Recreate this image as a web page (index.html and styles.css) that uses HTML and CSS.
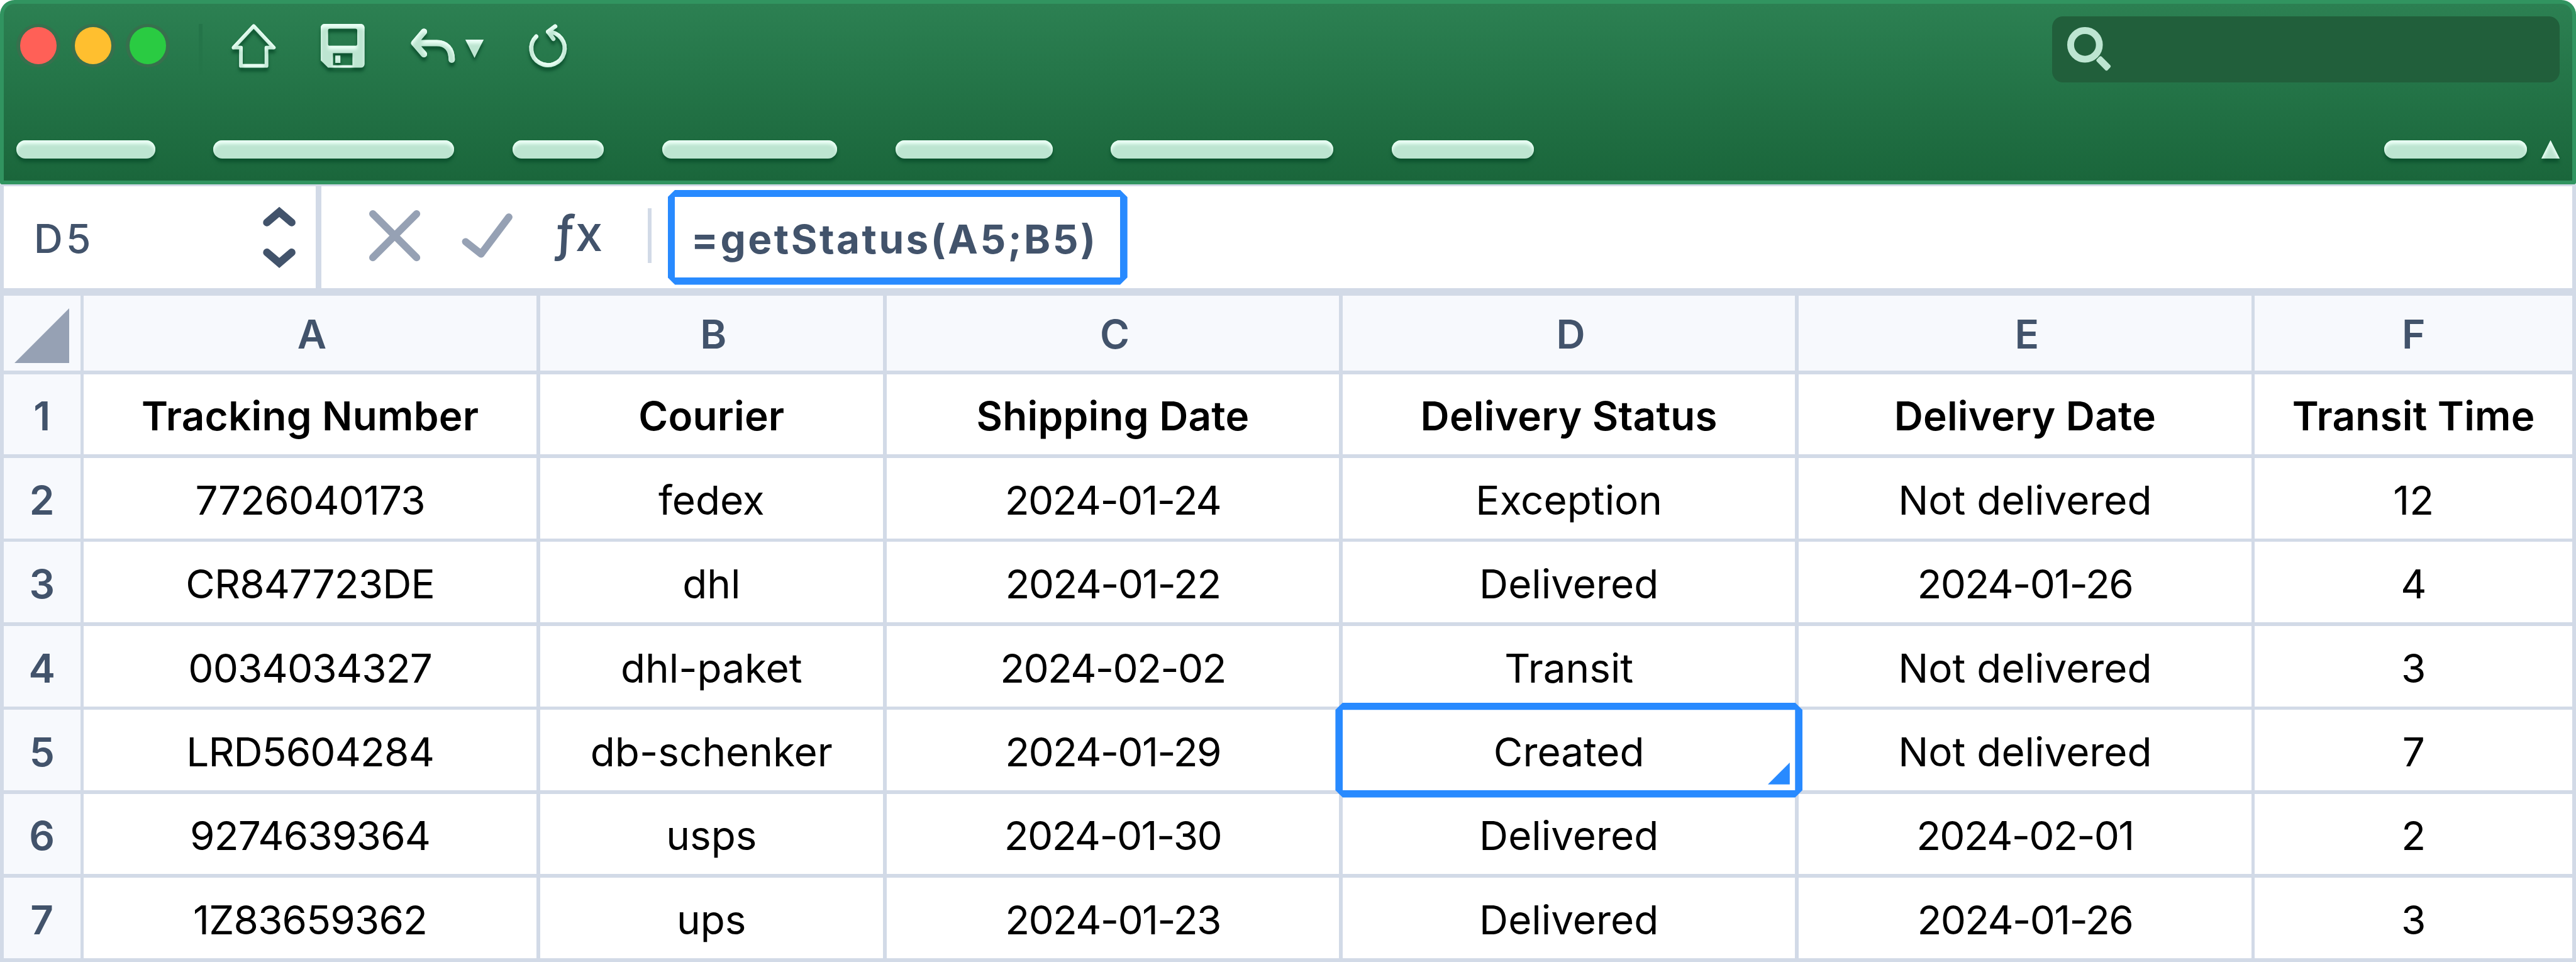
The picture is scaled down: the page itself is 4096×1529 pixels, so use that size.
FILE: index.html
```html
<!DOCTYPE html>
<html lang="en">
<head>
<meta charset="utf-8">
<title>Shipment tracking sheet</title>
<link rel="stylesheet" href="styles.css">
</head>
<body>
<main class="window">
  <header class="ribbon">
    <div class="titlebar">
      <div class="lights">
        <span class="light light-close"></span>
        <span class="light light-min"></span>
        <span class="light light-max"></span>
      </div>
      <span class="titlebar-rule"></span>
      <svg class="icon icon-home" viewBox="0 0 25 24">
        <defs>
          <filter id="emboss" filterUnits="userSpaceOnUse" x="-6" y="-6" width="40" height="40" color-interpolation-filters="sRGB">
            <feOffset in="SourceAlpha" dy="2" result="low"/>
            <feGaussianBlur in="low" stdDeviation="1" result="soft"/>
            <feFlood flood-color="#0a4f2c" flood-opacity=".9"/>
            <feComposite in2="soft" operator="in" result="shade"/>
            <feFlood flood-color="#eafff5"/>
            <feComposite in2="soft" operator="out"/>
            <feComposite in2="SourceAlpha" operator="in" result="shine"/>
            <feMerge>
              <feMergeNode in="shade"/>
              <feMergeNode in="SourceGraphic"/>
              <feMergeNode in="shine"/>
            </feMerge>
          </filter>
        </defs>
        <path class="line line-thin" d="M12.2 1.2 23.2 13H19.2V23H5.2V13H1.2Z"/>
      </svg>
      <svg class="icon icon-save" viewBox="0 0 24 24">
        <path class="solid" fill-rule="evenodd" d="M2 0H22A2 2 0 0 1 24 2V22A2 2 0 0 1 22 24H4L0 20V2A2 2 0 0 1 2 0ZM5 2.6A1 1 0 0 0 4 3.6V11A1 1 0 0 0 5 12H19A1 1 0 0 0 20 11V3.6A1 1 0 0 0 19 2.6ZM6.7 16V22.7H17.4V16ZM8 17.3H10.75V21.4H8Z"/>
      </svg>
      <svg class="icon icon-undo" viewBox="0 0 25 24">
        <path class="line line-thick" d="M7.25 4.3 2 10.5 7.25 16.6M2 10.5H14.3C19.4 10.5 22.5 13.8 22.5 19.6"/>
      </svg>
      <svg class="icon icon-caret" viewBox="0 0 10 10">
        <path class="solid" d="M0 0H10L5 10Z"/>
      </svg>
      <svg class="icon icon-redo" viewBox="0 0 22 24">
        <path class="line line-mid" d="M4 6.95A9.15 9.15 0 1 0 10.5 4.3M14.4 1.35 10.5 4.25 13.4 8.2"/>
      </svg>
      <div class="search">
        <svg class="icon-search" viewBox="0 0 24 24">
          <circle cx="9.75" cy="9.75" r="7.875"/>
          <rect x="15.7" y="18" width="8.4" height="3.8" rx=".9" transform="rotate(45 19.9 19.9)"/>
        </svg>
      </div>
    </div>
    <nav class="tabs">
      <span class="pill pill-1"></span>
      <span class="pill pill-2"></span>
      <span class="pill pill-3"></span>
      <span class="pill pill-4"></span>
      <span class="pill pill-5"></span>
      <span class="pill pill-6"></span>
      <span class="pill pill-7"></span>
      <span class="pill pill-share"></span>
      <svg class="icon icon-collapse" viewBox="0 0 10 10">
        <path class="solid" d="M0 10H10L5 0Z"/>
      </svg>
    </nav>
  </header>

  <section class="formula-bar">
    <div class="name-box">
      <span class="name">D5</span>
      <svg class="stepper" viewBox="0 0 18 32">
        <path d="M2.2 7.8 9 2 15.8 7.8M2.2 24.2 9 30 15.8 24.2"/>
      </svg>
    </div>
    <div class="formula">
      <svg class="icon-cancel" viewBox="0 0 28 28"><path d="M2 2 26 26M26 2 2 26"/></svg>
      <svg class="icon-accept" viewBox="0 0 28 28"><path d="M2.2 17.3 10.7 24 25.9 3.8"/></svg>
      <span class="fx"><span class="fx-f">ƒ</span><span class="fx-x">x</span></span>
      <span class="formula-rule"></span>
      <div class="formula-box"><span class="formula-text">=getStatus(A5;B5)</span></div>
    </div>
  </section>

  <section class="sheet">
    <div class="head corner"><svg class="select-all" viewBox="0 0 30 30"><path d="M30 0V30H0Z"/></svg></div>
    <div class="head">A</div><div class="head">B</div><div class="head">C</div><div class="head">D</div><div class="head">E</div><div class="head last">F</div>

    <div class="num">1</div><div class="cell title">Tracking Number</div><div class="cell title">Courier</div><div class="cell title">Shipping Date</div><div class="cell title">Delivery Status</div><div class="cell title">Delivery Date</div><div class="cell title">Transit Time</div>
    <div class="num">2</div><div class="cell code">7726040173</div><div class="cell">fedex</div><div class="cell date">2024-01-24</div><div class="cell">Exception</div><div class="cell">Not delivered</div><div class="cell">12</div>
    <div class="num">3</div><div class="cell code">CR847723DE</div><div class="cell">dhl</div><div class="cell date">2024-01-22</div><div class="cell">Delivered</div><div class="cell date">2024-01-26</div><div class="cell">4</div>
    <div class="num">4</div><div class="cell code">0034034327</div><div class="cell">dhl-paket</div><div class="cell date">2024-02-02</div><div class="cell">Transit</div><div class="cell">Not delivered</div><div class="cell">3</div>
    <div class="num">5</div><div class="cell code">LRD5604284</div><div class="cell">db-schenker</div><div class="cell date">2024-01-29</div><div class="cell selected">Created<span class="outline"></span><svg class="fill-handle" viewBox="0 0 12 12"><path d="M12 0V12H0Z"/></svg></div><div class="cell">Not delivered</div><div class="cell">7</div>
    <div class="num">6</div><div class="cell code">9274639364</div><div class="cell">usps</div><div class="cell date">2024-01-30</div><div class="cell">Delivered</div><div class="cell date">2024-02-01</div><div class="cell">2</div>
    <div class="num">7</div><div class="cell code">1Z83659362</div><div class="cell">ups</div><div class="cell date">2024-01-23</div><div class="cell">Delivered</div><div class="cell date">2024-01-26</div><div class="cell">3</div>
  </section>
</main>
</body>
</html>
```
FILE: styles.css
```css
/* 1rem is one design unit: the window is 1412 units wide */
:root {
  font-size: calc(100vw / 1412);
  --grid: #d2dae7;
  --slate: #42536b;
  --muted: #96a1b4;
  --mint: #bde5d1;
  --blue: #288aff;
}

* { box-sizing: border-box; }

body {
  margin: 0;
  background: #fff;
  overflow: hidden;
  font-family: Inter, "Liberation Sans", sans-serif;
}

svg { display: block; overflow: visible; flex: none; }

.window { width: 1412rem; height: 527rem; }

/* Ribbon */
.ribbon {
  height: 101rem;
  padding: 2rem;
  border-radius: 8rem 8rem 1rem 1rem;
  background: #319460;
  position: relative;
  display: flex;
  flex-direction: column;
}
.ribbon::before {
  content: "";
  position: absolute;
  inset: 2rem;
  border-radius: 6rem 6rem 0 0;
  background: linear-gradient(#2c8052, #1a663b);
}
.titlebar, .tabs { position: relative; display: flex; align-items: flex-start; }
.titlebar { height: 75rem; padding: 7rem 7rem 0; }

.lights { display: flex; gap: 6rem; margin-top: 4rem; }
.light { width: 24rem; height: 24rem; border-radius: 50%; padding: 2rem; background: #37704d; }
.light::after { content: ""; display: block; height: 20rem; border-radius: 50%; }
.light-close::after { background: #ff6057; }
.light-min::after { background: #ffbf2f; }
.light-max::after { background: #2acb42; }

.titlebar-rule {
  width: 2rem;
  height: 28rem;
  margin: 4rem 16rem 0 16rem;
  background: linear-gradient(#247449, #23744780);
}

.line { fill: none; stroke: var(--mint); stroke-linecap: round; stroke-linejoin: round; }
.solid { fill: var(--mint); }
.icon path { filter: url(#emboss); }
.line-thin { stroke-width: 2; }
.line-mid { stroke-width: 2.3; }
.line-thick { stroke-width: 3.5; }

.icon-home { width: 25rem; height: 24rem; margin-top: 4rem; }
.icon-save { width: 24rem; height: 24rem; margin: 4rem 0 0 24rem; }
.icon-undo { width: 25rem; height: 24rem; margin: 4rem 0 0 25rem; }
.icon-caret { width: 10rem; height: 10rem; margin: 12.7rem 0 0 5.2rem; }
.icon-redo { width: 22rem; height: 24rem; margin: 4rem 0 0 24.8rem; }

.search {
  width: 278rem;
  height: 36rem;
  margin-left: auto;
  padding: 6rem 8rem;
  border-radius: 6rem;
  background: #215f3b;
}
.icon-search { width: 24rem; height: 24rem; fill: var(--mint); }
.icon-search circle { fill: none; stroke: var(--mint); stroke-width: 3.75; }

.tabs { padding: 0 7rem; }
.pill {
  height: 10rem;
  border-radius: 5rem;
  background: var(--mint);
  box-shadow: inset 0 2rem 2rem #eafff5, 0 2rem 2rem #0a4f2cd0;
}
.pill-1 { width: 76rem; }
.pill-2 { width: 132rem; margin-left: 32rem; }
.pill-3 { width: 50rem; margin-left: 32rem; }
.pill-4 { width: 96rem; margin-left: 32rem; }
.pill-5 { width: 86rem; margin-left: 32rem; }
.pill-6 { width: 122rem; margin-left: 32rem; }
.pill-7 { width: 78rem; margin-left: 32rem; }
.pill-share { width: 78rem; margin-left: auto; }
.icon-collapse { width: 10rem; height: 10rem; margin-left: 8rem; }

/* Formula bar */
.formula-bar {
  height: 61rem;
  padding: 1rem 2rem 4rem;
  background: var(--grid);
  display: flex;
  gap: 2.8rem;
}
.name-box, .formula { background: #fff; display: flex; }
.name-box {
  width: 171.2rem;
  padding: 12rem 11.2rem 0 16.5rem;
  justify-content: space-between;
}
.name {
  margin-top: 1rem;
  font-size: 22rem;
  line-height: 31rem;
  font-weight: 500;
  letter-spacing: 1.8rem;
  color: var(--slate);
}
.stepper { width: 18rem; height: 32rem; fill: none; stroke: var(--slate); stroke-width: 4.2; stroke-linecap: round; }
.formula { flex: 1; padding-left: 26.2rem; }
.icon-cancel, .icon-accept { width: 28rem; height: 28rem; fill: none; stroke: var(--muted); stroke-width: 4; stroke-linecap: round; stroke-linejoin: round; }
.icon-cancel { margin-top: 13rem; }
.icon-accept { margin: 13rem 0 0 23rem; }
.fx {
  width: 30rem;
  margin: 10.6rem 0 0 22.5rem;
  font-size: 27rem;
  line-height: 30rem;
  font-weight: 500;
  color: var(--slate);
  display: flex;
}
.fx-f { transform: skewX(-3deg); }
.fx-x { margin-left: .5rem; }
.formula-rule { width: 2rem; height: 30rem; margin: 12rem 9rem 0 21.3rem; background: var(--grid); }
.formula-box {
  height: 52rem;
  width: 252rem;
  margin-top: 2rem;
  padding: 4rem;
  background: var(--blue);
  clip-path: polygon(4rem 0, calc(100% - 4rem) 0, 100% 4rem, 100% calc(100% - 4rem), calc(100% - 4rem) 100%, 4rem 100%, 0 calc(100% - 4rem), 0 4rem);
}
.formula-text {
  display: block;
  height: 44rem;
  padding: 2rem 0 0 8.8rem;
  background: #fff;
  font-size: 22rem;
  line-height: 42rem;
  font-weight: 750;
  letter-spacing: 1.2rem;
  color: var(--slate);
  white-space: nowrap;
}

/* Sheet */
.sheet {
  height: 365rem;
  padding: 0 2rem 2rem;
  background: var(--grid);
  display: grid;
  grid-template-columns: 42rem 248rem 188rem 248rem 248rem 248rem 174rem;
  grid-template-rows: 41rem repeat(7, 44rem);
  gap: 2rem;
}
.head, .num, .cell {
  display: flex;
  align-items: center;
  justify-content: center;
  font-size: 22rem;
  white-space: nowrap;
}
.head, .num { background: #f7f9fd; color: var(--slate); font-weight: 600; }
.head { padding: 1rem 0 0 2rem; }
.head.last { padding-left: 0; }
.num { padding-top: 1.6rem; }
.cell { padding-top: 1.6rem; background: #fff; color: #000; font-weight: 440; }
.code { letter-spacing: -.3rem; }
.date { letter-spacing: -.58rem; }
.title { font-weight: 620; letter-spacing: .08rem; }
.select-all { width: 30rem; height: 30rem; margin-top: 2rem; fill: var(--muted); }
.head.corner { padding: 1rem 0 0; }

.selected { position: relative; z-index: 1; }
.outline {
  position: absolute;
  inset: -4rem;
  background: var(--blue);
  clip-path: polygon(evenodd,
    4rem 0, calc(100% - 4rem) 0, 100% 4rem, 100% calc(100% - 4rem), calc(100% - 4rem) 100%, 4rem 100%, 0 calc(100% - 4rem), 0 4rem, 4rem 0,
    4rem 4rem, calc(100% - 4rem) 4rem, calc(100% - 4rem) calc(100% - 4rem), 4rem calc(100% - 4rem), 4rem 4rem, 4rem 0);
}
.fill-handle { position: absolute; right: 3rem; bottom: 3rem; width: 12rem; height: 12rem; fill: var(--blue); }
```
